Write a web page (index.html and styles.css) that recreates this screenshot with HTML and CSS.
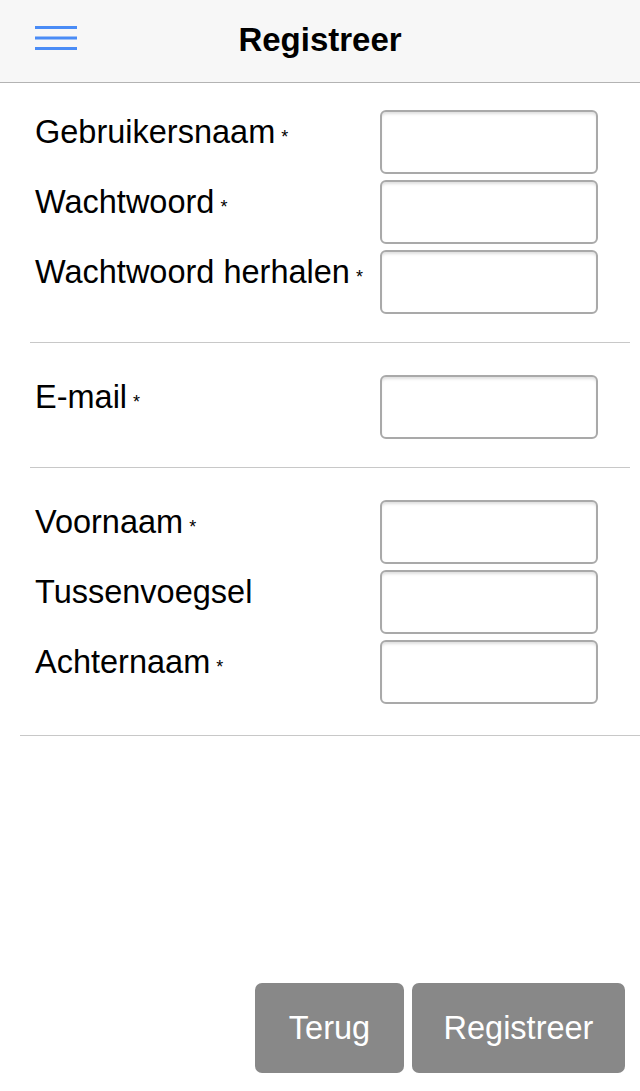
FILE: index.html
```html
<!DOCTYPE html>
<html>
<head lang="nl">
    <meta charset="UTF-8">
    <title>Registreer</title>
    <link rel="stylesheet" href="styles.css">
</head>
<body>
<div id="page">
    <div id="header">
        <span class="menu">
            <svg width="42" height="24" viewBox="0 0 42 24">
                <rect x="0" y="0" width="42" height="3" fill="#4a8cf6"/>
                <rect x="0" y="10.5" width="42" height="3" fill="#4a8cf6"/>
                <rect x="0" y="21" width="42" height="3" fill="#4a8cf6"/>
            </svg>
        </span>
        <h1>Registreer</h1>
        <span></span>
    </div>

    <div class="section first">
        <div class="row">
            <label>Gebruikersnaam<span class="req">*</span></label>
            <input type="text">
        </div>
        <div class="row">
            <label>Wachtwoord<span class="req">*</span></label>
            <input type="password">
        </div>
        <div class="row">
            <label>Wachtwoord herhalen<span class="req">*</span></label>
            <input type="password">
        </div>
    </div>

    <div class="section">
        <div class="row">
            <label>E-mail<span class="req">*</span></label>
            <input type="text">
        </div>
    </div>

    <div class="section last">
        <div class="row">
            <label>Voornaam<span class="req">*</span></label>
            <input type="text">
        </div>
        <div class="row">
            <label>Tussenvoegsel</label>
            <input type="text">
        </div>
        <div class="row">
            <label>Achternaam<span class="req">*</span></label>
            <input type="text">
        </div>
    </div>

    <div id="buttons">
        <span class="btn back">Terug</span>
        <span class="btn submit">Registreer</span>
    </div>
</div>
</body>
</html>
```

FILE: styles.css
```css
*{
    margin: 0;
    padding: 0;
    box-sizing: border-box;
}
body{
    font-family: "Liberation Sans", Arial, sans-serif;
    color: #000;
    background: #fff;
}
#page{
    display: flex;
    flex-direction: column;
    min-height: 100vh;
}
#header{
    height: 83px;
    background: #f7f7f7;
    border-bottom: 1px solid #b3b3b3;
    display: grid;
    grid-template-columns: 1fr auto 1fr;
    align-items: start;
    padding: 0 35px;
}
#header .menu{
    display: block;
    width: 42px;
    height: 24px;
    margin-top: 26px;
}
#header .menu svg{
    display: block;
}
#header h1{
    font-size: 33px;
    font-weight: bold;
    line-height: 38px;
    margin-top: 21px;
}
.section{
    margin: 0 10px 0 30px;
    padding: 27px 32px 28px 5px;
    border-bottom: 1px solid #c8c8c8;
    display: flex;
    flex-direction: column;
    gap: 6px;
}
.section + .section{
    padding-top: 32px;
}
.section.last{
    margin: 0 0 0 20px;
    padding: 32px 42px 31px 15px;
}
.row{
    display: flex;
    align-items: flex-start;
    justify-content: space-between;
}
.row label{
    font-size: 32.5px;
    line-height: 36px;
    padding-top: 4px;
    white-space: nowrap;
}
.req{
    font-size: 18px;
    margin-left: 6px;
}
.row input{
    width: 218px;
    height: 64px;
    border: 2px solid #a9a9a9;
    border-radius: 6px;
    background: #fff;
    box-shadow: inset 0 3px 3px -1px rgba(0,0,0,0.13);
    font-size: 28px;
    outline: none;
}
#buttons{
    margin-top: auto;
    display: flex;
    justify-content: flex-end;
    gap: 8px;
    padding: 0 15px 18px;
}
.btn{
    height: 90px;
    background: #888888;
    color: #fff;
    border-radius: 7px;
    font-size: 32.5px;
    display: flex;
    align-items: center;
    justify-content: center;
}
.btn.back{
    width: 149px;
}
.btn.submit{
    width: 213px;
}
```
